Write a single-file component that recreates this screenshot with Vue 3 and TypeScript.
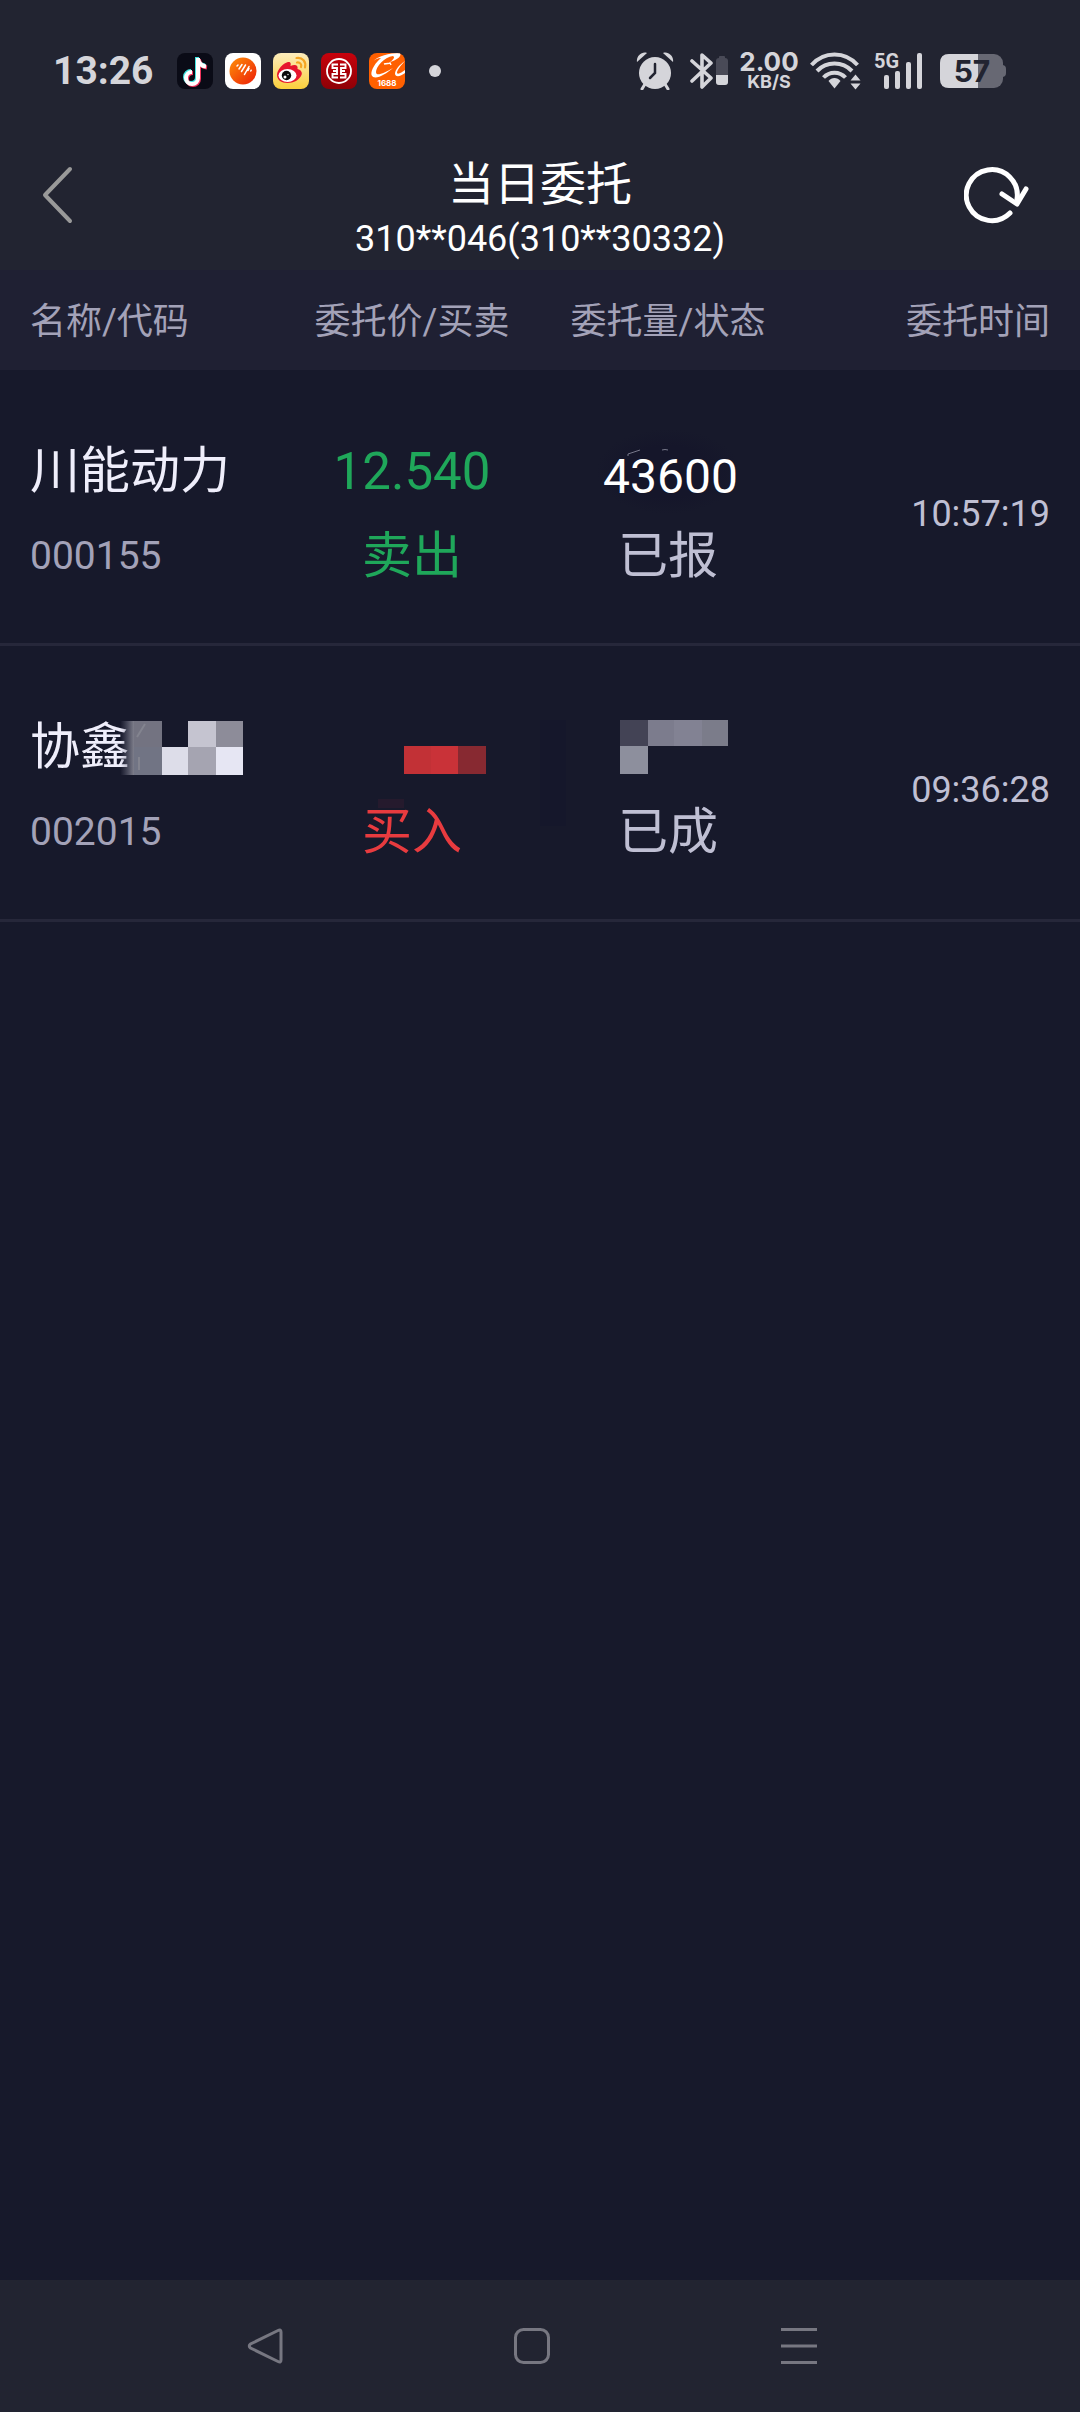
<script setup lang="ts">
type Side = 'sell' | 'buy'

interface Order {
  name: string
  code: string
  price: string | null
  side: Side
  amount: string | null
  status: string
  time: string
}

const columns: string[] = ['名称/代码', '委托价/买卖', '委托量/状态', '委托时间']

const orders: Order[] = [
  { name: '川能动力', code: '000155', price: '12.540', side: 'sell', amount: '43600', status: '已报', time: '10:57:19' },
  { name: '协鑫', code: '002015', price: null, side: 'buy', amount: null, status: '已成', time: '09:36:28' },
]

const sideLabel: Record<Side, string> = { sell: '卖出', buy: '买入' }
</script>

<template>
  <div class="page">
    <div class="status-bar">
      <div class="status-left">
        <span class="clock">13:26</span>
        <div class="apps">
          <svg class="app" viewBox="0 0 36 36" aria-hidden="true">
            <rect width="36" height="36" rx="8" fill="#0a0b16" />
            <g fill="none" stroke-width="4">
              <path d="M20 4v20a6 6 0 1 1-6-6M20 5c1 5 3.500 7 8 7.500" stroke="#3fe3e0" />
              <path d="M22 6v20a6 6 0 1 1-6-6M22 7c1 5 3.500 7 8 7.500" stroke="#f0345c" />
              <path d="M21 5v20a6 6 0 1 1-6-6M21 6c1 5 3.500 7 8 7.500" stroke="#fff" />
            </g>
          </svg>
          <svg class="app" viewBox="0 0 36 36" aria-hidden="true">
            <defs>
              <linearGradient id="orb" x1="0" y1="0" x2="1" y2="1">
                <stop offset="0.200" stop-color="#fb7a08" />
                <stop offset="1" stop-color="#ec1c08" />
              </linearGradient>
            </defs>
            <rect width="36" height="36" rx="8" fill="#fff" />
            <circle cx="18" cy="18" r="13.500" fill="url(#orb)" />
            <path d="M12 13l1-1M14 16l3-4.500M16.500 18.500l4-6.500M19.500 21.500l4.500-8M23 17.500l1-2M25.800 18l.4-.8" stroke="#fff" stroke-width="1.500" stroke-linecap="round" />
          </svg>
          <svg class="app" viewBox="0 0 36 36" aria-hidden="true">
            <defs>
              <linearGradient id="sun" x1="0" y1="0" x2="0" y2="1">
                <stop offset="0" stop-color="#fdecbc" />
                <stop offset="1" stop-color="#fbd03c" />
              </linearGradient>
            </defs>
            <rect width="36" height="36" rx="8" fill="url(#sun)" />
            <path d="M4 22c0-5 6-12 11-13 3-.5 3 2 2.500 4 4-2 8-1.500 7 3 4 1 5 4 4 6-2 5-8 8-14 8S4 27 4 22z" fill="#e6162d" />
            <ellipse cx="14.500" cy="22.500" rx="9" ry="6.500" fill="#fff" />
            <circle cx="13.500" cy="22.500" r="4.700" fill="#0b0b0b" />
            <circle cx="12" cy="24" r="1.500" fill="#fff" />
            <circle cx="15" cy="21.500" r=".7" fill="#fff" />
            <path d="M23.500 5c6-1 10 4 8.500 9.500M24 9.500c3-.5 5 2 4 4.500" fill="none" stroke="#f5a623" stroke-width="2.200" stroke-linecap="round" />
          </svg>
          <svg class="app" viewBox="0 0 36 36" aria-hidden="true">
            <defs>
              <linearGradient id="crimson" x1="0" y1="0" x2="0" y2="1">
                <stop offset="0" stop-color="#c8020c" />
                <stop offset="1" stop-color="#8e0006" />
              </linearGradient>
            </defs>
            <rect width="36" height="36" rx="8" fill="url(#crimson)" />
            <circle cx="18" cy="18" r="12" fill="none" stroke="#fff" stroke-width="1.800" />
            <path d="M17 11.500h-5.500V15H16v6h-4.500v3.500H17M19 11.500h5.500V15H20v6h4.500v3.500H19M12 18h4M20 18h4" fill="none" stroke="#fff" stroke-width="1.900" />
          </svg>
          <svg class="app" viewBox="0 0 36 36" aria-hidden="true">
            <defs>
              <clipPath id="tile"><rect width="36" height="36" rx="8" /></clipPath>
            </defs>
            <g clip-path="url(#tile)">
              <rect width="36" height="36" fill="#ff6000" />
              <path d="M3 9C9 3 20 0 31 0c2 3-3 7-10 9 4-3 5-5 3-6C15 4 7 14 7 19c0 5 8 1 17-4C16 22 5 28 2.500 22 1.500 17 7 9 12 5 9 5 5 7 3 9z" fill="#fff" />
              <path d="M15 11c3-1 5 0 6-1l1 2" fill="none" stroke="#fff" stroke-width="1.500" />
              <path d="M36 8c-4 4-8 9-8 12 1 2 5-1 8-3v3c-4 3-9 5-10 1 0-4 4-9 10-13z" fill="#fff" />
              <text x="18" y="33" class="app-label" text-anchor="middle">1688</text>
            </g>
          </svg>
        </div>
        <span class="more-dot"></span>
      </div>
      <div class="status-right">
        <svg width="38" height="38" viewBox="0 0 38 38" aria-hidden="true">
          <g fill="#d5d5da">
            <path d="M1 10C0 4 6-1 11 1z" />
            <path d="M37 10c1-6-5-11-10-9z" />
            <circle cx="19" cy="21" r="16" />
          </g>
          <path d="M9 32l-3 5M29 32l3 5" stroke="#d5d5da" stroke-width="3" stroke-linecap="round" />
          <path d="M19 12v9l-5 5" fill="none" stroke="#222431" stroke-width="2.500" stroke-linecap="round" />
        </svg>
        <svg class="bluetooth" width="38" height="38" viewBox="0 0 38 38" aria-hidden="true">
          <path d="M2 9l19 17-9 9V3l9 8L2 29" fill="none" stroke="#d5d5da" stroke-width="3.600" stroke-linejoin="round" stroke-linecap="round" />
          <rect x="29" y="4" width="6" height="4" rx="1" fill="#494a57" />
          <rect x="26" y="6" width="12" height="27" rx="3" fill="#494a57" />
          <path d="M26 23h12v7q0 3-3 3h-6q-3 0-3-3z" fill="#d5d5da" />
        </svg>
        <div class="speed">
          <span class="speed-value">2.00</span>
          <span class="speed-unit">KB/S</span>
        </div>
        <svg width="51" height="38" viewBox="0 0 51 38" aria-hidden="true">
          <g fill="none" stroke="#d5d5da" stroke-width="4">
            <path d="M1.500 13C14-1 35-1 47.500 13" />
            <path d="M7 19c9.500-10 25.500-10 35 0" />
            <path d="M13.500 25.500c6-6.500 16-6.500 22 0" />
          </g>
          <path d="M18.500 29c3-4 9-4 12 0l-6 7.500z" fill="#d5d5da" />
          <path d="M40.500 28.500l5-6 5 6zM40.500 31.500h10l-5 6z" fill="#d5d5da" />
        </svg>
        <svg class="signal" width="49" height="38" viewBox="0 0 49 38" aria-hidden="true">
          <text x="0" y="16" class="network">5G</text>
          <g fill="#d5d5da">
            <rect x="10" y="23" width="5" height="14" rx="2" />
            <rect x="21" y="19" width="5" height="18" rx="2" />
            <rect x="32" y="10" width="5" height="27" rx="2" />
            <rect x="43" y="1" width="5" height="36" rx="2" />
          </g>
        </svg>
        <svg width="66" height="34" viewBox="0 0 66 34" aria-hidden="true">
          <rect x="58" y="11" width="8" height="12" rx="4" fill="#676873" />
          <rect width="63" height="34" rx="9" fill="#676873" />
          <path d="M38 0H9Q0 0 0 9v16q0 9 9 9h29z" fill="#d5d5da" />
          <text x="32" y="28" class="battery-level" text-anchor="middle">57</text>
        </svg>
      </div>
    </div>

    <header class="title-bar">
      <button class="icon-button back" type="button" aria-label="返回">
        <svg width="32" height="58" viewBox="0 0 32 58">
          <path d="M28 3L3 29l25 26" fill="none" stroke="#999" stroke-width="4" stroke-linecap="round" stroke-linejoin="round" />
        </svg>
      </button>
      <div class="heading">
        <h1>当日委托</h1>
        <p>310**046(310**30332)</p>
      </div>
      <button class="icon-button refresh" type="button" aria-label="刷新">
        <svg width="66" height="58" viewBox="0 0 66 58">
          <path d="M46 47A25.500 25.500 0 1 1 53 33" fill="none" stroke="#fff" stroke-width="5" stroke-linecap="round" />
          <path d="M38 28l15 10 9-15" fill="none" stroke="#fff" stroke-width="5" stroke-linecap="round" stroke-linejoin="round" />
        </svg>
      </button>
    </header>

    <main class="content">
      <table class="orders">
        <colgroup>
          <col />
          <col class="mid" />
          <col class="mid" />
          <col />
        </colgroup>
        <thead>
          <tr>
            <th v-for="column in columns" :key="column" scope="col">{{ column }}</th>
          </tr>
        </thead>
        <tbody>
          <tr v-for="order in orders" :key="order.code">
            <td>
              <div class="line name">
                <span>{{ order.name }}</span>
                <svg v-if="order.price === null" class="name-mask" width="126" height="54" viewBox="0 0 126 54" aria-hidden="true">
                  <defs>
                    <linearGradient id="fade" x1="0" y1="0" x2="1" y2="0">
                      <stop offset="0.200" stop-color="#74758a" stop-opacity="0" />
                      <stop offset="1" stop-color="#8a8a96" stop-opacity="0.900" />
                    </linearGradient>
                  </defs>
                  <rect width="17" height="54" fill="url(#fade)" />
                  <rect x="17" width="28" height="26" fill="#737381" />
                  <rect x="17" y="26" width="28" height="28" fill="#717484" />
                  <path d="M28 3l-8 13M22 36v13" fill="none" stroke="#83848f" stroke-width="2" />
                  <rect x="45" y="26" width="26" height="28" fill="#dddde9" />
                  <rect x="71" width="28" height="26" fill="#c5c4d0" />
                  <rect x="71" y="26" width="28" height="28" fill="#a5a4b1" />
                  <rect x="99" width="27" height="26" fill="#8d8c99" />
                  <rect x="99" y="26" width="27" height="28" fill="#e6e6f3" />
                </svg>
              </div>
              <div class="line code">{{ order.code }}</div>
            </td>
            <td :class="order.side">
              <div class="line">
                <span v-if="order.price" class="price">{{ order.price }}</span>
                <svg v-else class="mask" width="148" height="54" viewBox="0 0 148 54" aria-hidden="true">
                  <rect x="66" y="26" width="28" height="28" fill="#c23136" />
                  <rect x="93" y="26" width="27" height="28" fill="#c93238" />
                  <rect x="120" y="26" width="28" height="28" fill="#872931" />
                  <rect x="40" y="79" width="26" height="9" fill="#251a2d" />
                </svg>
              </div>
              <div class="line">{{ sideLabel[order.side] }}</div>
            </td>
            <td class="state">
              <div v-if="order.amount" class="line amount">
                {{ order.amount }}
                <svg class="trace" width="44" height="8" viewBox="0 0 44 8" aria-hidden="true">
                  <path d="M2 7V5l12-4M36 1q3-1 6 0" fill="none" stroke="#77788a" stroke-width="1" />
                </svg>
              </div>
              <div v-else class="line">
                <svg class="mask" width="120" height="54" viewBox="0 0 120 54" aria-hidden="true">
                  <rect x="-68" width="26" height="106" fill="#15172b" />
                  <rect x="12" width="28" height="26" fill="#434355" />
                  <rect x="40" width="26" height="26" fill="#7c7c8d" />
                  <rect x="66" width="28" height="26" fill="#828293" />
                  <rect x="94" width="26" height="26" fill="#7b7c8a" />
                  <rect x="12" y="26" width="28" height="28" fill="#8d8f9d" />
                </svg>
              </div>
              <div class="line">{{ order.status }}</div>
            </td>
            <td class="time">{{ order.time }}</td>
          </tr>
        </tbody>
      </table>
    </main>

    <nav class="nav-bar">
      <button type="button" aria-label="后退">
        <svg width="36" height="36" viewBox="0 0 36 36">
          <path d="M31 2.500L3.500 16Q1 18 3.500 20L31 33.500Q34 35 34 32V4Q34 1 31 2.500z" />
        </svg>
      </button>
      <button type="button" aria-label="主屏幕">
        <svg width="36" height="36" viewBox="0 0 36 36">
          <rect x="1.500" y="1.500" width="33" height="33" rx="8" />
        </svg>
      </button>
      <button type="button" aria-label="最近任务">
        <svg width="36" height="36" viewBox="0 0 36 36">
          <path d="M0 1.500h36M0 18h36M0 34.500h36" />
        </svg>
      </button>
    </nav>
  </div>
</template>

<style>
body {
  margin: 0;
  background: #17192b;
}
</style>

<style scoped>
.page {
  display: flex;
  flex-direction: column;
  min-height: 100vh;
  background: #17192b;
  color: #efeefb;
  font-family: Roboto, 'Noto Sans CJK SC', sans-serif;
}

button {
  display: flex;
  align-items: center;
  justify-content: center;
  padding: 0;
  border: 0;
  background: none;
}

svg {
  display: block;
  flex: none;
}

.status-bar {
  display: flex;
  align-items: center;
  justify-content: space-between;
  box-sizing: border-box;
  height: 120px;
  padding: 22px 74px 0 53px;
  background: #222431;
  color: #d5d5da;
  font-family: Inter, sans-serif;
}

.status-left,
.status-right,
.apps {
  display: flex;
  align-items: center;
}

.clock {
  width: 124px;
  font-family: Roboto, sans-serif;
  font-size: 39px;
  font-weight: 700;
  line-height: 48px;
}

.apps {
  gap: 12px;
}

.app {
  width: 36px;
  height: 36px;
}

.app-label {
  fill: #fff;
  font-size: 8px;
  font-weight: 700;
}

.more-dot {
  width: 12px;
  height: 12px;
  margin-left: 24px;
  border-radius: 50%;
  background: #d5d5da;
}

.bluetooth {
  margin-left: 16px;
}

.speed {
  display: flex;
  flex-direction: column;
  align-items: center;
  width: 58px;
  margin: 0 12px;
  font-weight: 700;
}

.speed-value {
  font-size: 26px;
  line-height: 22px;
}

.speed-unit {
  font-size: 18px;
  line-height: 18px;
}

.signal {
  margin: 0 17px 0 13px;
  overflow: visible;
}

.network {
  fill: #d5d5da;
  font-family: Roboto, sans-serif;
  font-size: 20px;
  font-weight: 700;
}

.battery-level {
  fill: #222431;
  font-size: 30px;
  font-weight: 700;
}

.title-bar {
  display: flex;
  align-items: center;
  justify-content: space-between;
  height: 150px;
  background: #222431;
  color: #fff;
}

.icon-button {
  justify-content: flex-start;
  width: 170px;
  height: 100%;
}

.back {
  padding-left: 42px;
}

.refresh {
  padding-left: 54px;
}

.heading {
  padding-top: 28px;
  text-align: center;
}

h1 {
  margin: 0;
  font-size: 46px;
  font-weight: 400;
  line-height: 60px;
}

p {
  margin: 0;
  font-size: 36px;
  line-height: 50px;
}

.content {
  flex: 1;
}

.orders {
  width: 100%;
  border-collapse: collapse;
  table-layout: fixed;
}

.mid {
  width: 256px;
}

th {
  height: 96px;
  padding: 4px 0 0;
  background: #1f2033;
  color: #a3a2b8;
  font-size: 36px;
  font-weight: 400;
  line-height: 48px;
  white-space: nowrap;
}

td {
  padding: 59px 0 44px;
  border-bottom: 3px solid #26273a;
  font-size: 50px;
  text-align: center;
  white-space: nowrap;
}

th:first-child,
td:first-child {
  padding-left: 30px;
  text-align: left;
}

th:last-child,
td:last-child {
  padding-right: 30px;
  text-align: right;
}

.line {
  height: 85px;
  line-height: 85px;
}

.name {
  display: flex;
  align-items: center;
}

.code {
  color: #a3a2b8;
  font-size: 39px;
}

.price {
  font-size: 51px;
}

.sell {
  color: #1fa75a;
}

.buy {
  color: #e83b3f;
}

.state {
  color: #bfbfd3;
}

.amount {
  position: relative;
  box-sizing: border-box;
  padding: 11px 0 0 5px;
  color: #fff;
  font-size: 48px;
  line-height: 73px;
  background: radial-gradient(closest-side, #15162a 60%, transparent) center / 144px 100% no-repeat;
}

.trace {
  position: absolute;
  top: 20px;
  left: 86px;
}

.mask {
  margin: 0 auto;
  padding-top: 15px;
  overflow: visible;
}

.name-mask {
  margin-left: -13px;
}

.time {
  color: #bfbfd3;
  font-size: 36px;
}

.nav-bar {
  display: flex;
  align-items: center;
  height: 132px;
  padding: 0 147px 0 131px;
  background: #222431;
}

.nav-bar button {
  flex: 1;
  height: 100%;
}

.nav-bar svg {
  fill: none;
  stroke: #777781;
  stroke-width: 3;
}
</style>
